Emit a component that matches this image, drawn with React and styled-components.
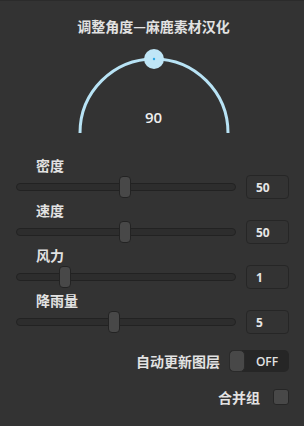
import React from 'react';
import styled, { createGlobalStyle } from 'styled-components';

const GlobalStyle = createGlobalStyle`
  html, body {
    margin: 0;
    padding: 0;
    background: #333333;
  }
  body {
    font-family: 'Noto Sans CJK SC', 'Noto Sans', sans-serif;
  }
`;

const sliders = [
  { label: '密度', value: '50', pos: 0.495 },
  { label: '速度', value: '50', pos: 0.495 },
  { label: '风力', value: '1', pos: 0.22 },
  { label: '降雨量', value: '5', pos: 0.443 },
];

const Panel = styled.div`
  width: 304px;
  height: 426px;
  box-sizing: border-box;
  background: #333333;
  border-top: 1px solid #2b2b2b;
  display: flex;
  flex-direction: column;
  padding: 16px 15px 0 16px;
  color: #e2e2e2;
`;

const Title = styled.div`
  text-align: center;
  font-size: 14px;
  font-weight: 700;
  line-height: 18px;
  padding-left: 2px;
`;

const Dial = styled.div`
  position: relative;
  align-self: center;
  width: 160px;
  height: 88px;
  margin-top: 13px;
  margin-left: 2px;

  svg {
    display: block;
  }
`;

const DialValue = styled.div`
  position: absolute;
  left: 0;
  right: 0;
  top: 59px;
  text-align: center;
  font-family: 'Open Sans', 'Noto Sans', sans-serif;
  font-size: 15px;
  font-weight: 600;
  color: #eeeeee;
`;

const Sliders = styled.div`
  display: flex;
  flex-direction: column;
  gap: 2px;
  margin-top: 20px;
`;

const Block = styled.div`
  display: flex;
  flex-direction: column;
  gap: 1px;
`;

const Label = styled.div`
  margin-left: 20px;
  font-size: 14px;
  font-weight: 700;
  line-height: 18px;
`;

const Row = styled.div`
  display: flex;
  align-items: center;
  gap: 10px;
  height: 24px;
`;

const Track = styled.div`
  position: relative;
  flex: 1;
  height: 8px;
  box-sizing: border-box;
  border-radius: 5px;
  background: #2d2d2d;
  border: 1px solid #222222;
`;

const Thumb = styled.div`
  position: absolute;
  top: 50%;
  width: 12px;
  height: 22px;
  box-sizing: border-box;
  transform: translate(-50%, -50%);
  border-radius: 4px;
  background: #484848;
  border: 1px solid #232323;
`;

const ValueBox = styled.div`
  width: 43px;
  height: 24px;
  box-sizing: border-box;
  border: 1px solid #262626;
  border-radius: 4px;
  padding-left: 9px;
  display: flex;
  align-items: center;
  font-family: 'Open Sans', 'Noto Sans', sans-serif;
  font-size: 12px;
  font-weight: 700;
  color: #e6e6e6;
`;

const OptionRow = styled.div`
  display: flex;
  justify-content: flex-end;
  align-items: center;
  gap: ${(p) => p.$gap}px;
  margin-top: ${(p) => p.$top}px;
`;

const OptionLabel = styled.div`
  font-size: 14px;
  font-weight: 700;
  line-height: 18px;
`;

const Switch = styled.div`
  width: 60px;
  height: 22px;
  border-radius: 5px;
  background: #262626;
  display: flex;
  align-items: center;
`;

const SwitchKnob = styled.div`
  width: 16px;
  height: 22px;
  box-sizing: border-box;
  border-radius: 5px;
  background: #484848;
  border: 1px solid #2a2a2a;
`;

const SwitchText = styled.div`
  flex: 1;
  text-align: center;
  font-family: 'Open Sans', 'Noto Sans', sans-serif;
  font-size: 12px;
  font-weight: 600;
  color: #e2e2e2;
`;

const Checkbox = styled.div`
  width: 16px;
  height: 16px;
  box-sizing: border-box;
  border-radius: 3px;
  background: #484848;
  border: 1px solid #262626;
`;

const DialDrawing = () => (
  <svg width="160" height="88" viewBox="0 0 160 88">
    <path
      d="M 6 85 A 74 74 0 0 1 154 85"
      fill="none"
      stroke="#b8e3f5"
      strokeWidth="3"
    />
    <circle cx="80" cy="11" r="10" fill="#bfe6f7" />
    <circle cx="80" cy="11" r="1.2" fill="#2aa7e6" />
  </svg>
);

const App = () => {
  return (
    <>
      <GlobalStyle />
      <Panel>
        <Title>调整角度—麻鹿素材汉化</Title>
        <Dial>
          <DialDrawing />
          <DialValue>90</DialValue>
        </Dial>
        <Sliders>
          {sliders.map((s) => (
            <Block key={s.label}>
              <Label>{s.label}</Label>
              <Row>
                <Track>
                  <Thumb style={{ left: `${s.pos * 100}%` }} />
                </Track>
                <ValueBox>{s.value}</ValueBox>
              </Row>
            </Block>
          ))}
        </Sliders>
        <OptionRow $gap={9} $top={16}>
          <OptionLabel>自动更新图层</OptionLabel>
          <Switch>
            <SwitchKnob />
            <SwitchText>OFF</SwitchText>
          </Switch>
        </OptionRow>
        <OptionRow $gap={13} $top={16}>
          <OptionLabel>合并组</OptionLabel>
          <Checkbox />
        </OptionRow>
      </Panel>
    </>
  );
};

export default App;
